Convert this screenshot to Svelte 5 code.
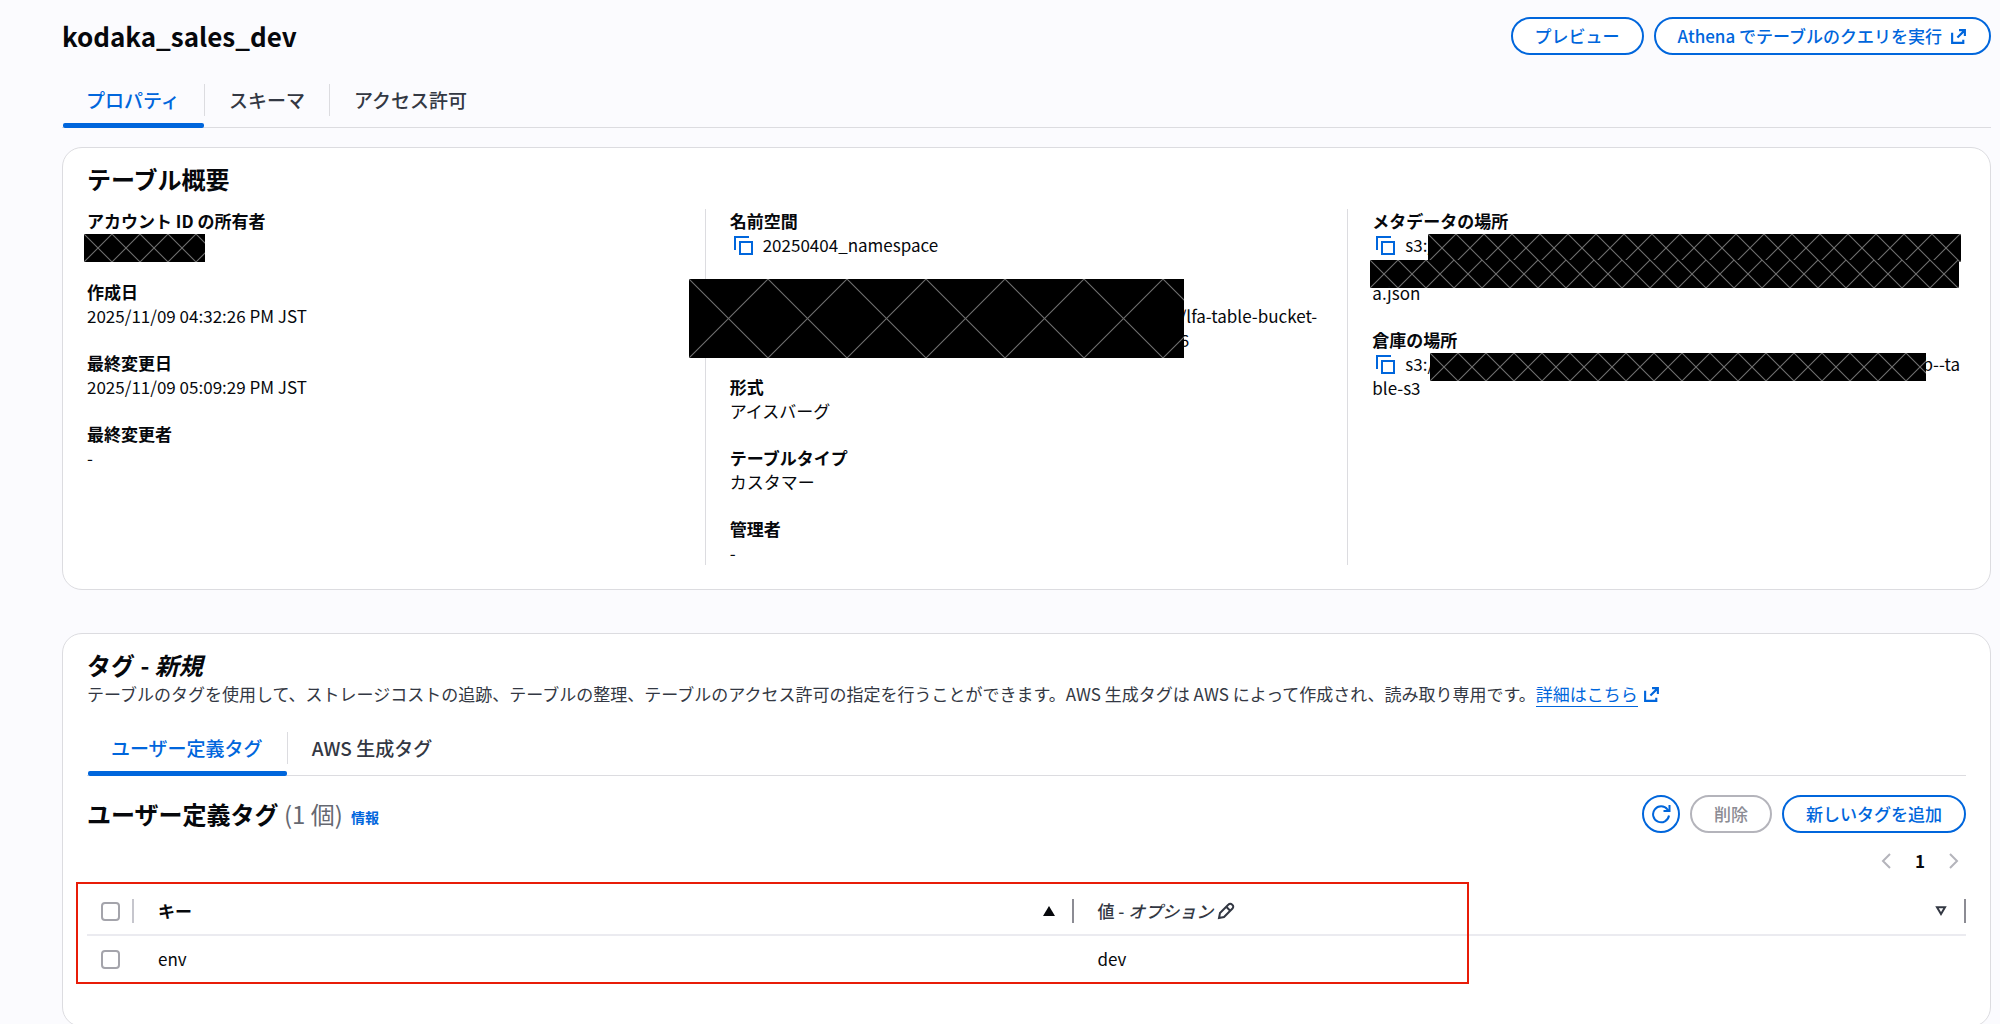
<script lang="ts">
  type Tag = { key: string; value: string };

  const pageTabs = ['プロパティ', 'スキーマ', 'アクセス許可'];
  const tagTabs = ['ユーザー定義タグ', 'AWS 生成タグ'];
  const tags: Tag[] = [{ key: 'env', value: 'dev' }];

  let activePageTab = $state(0);
  let activeTagTab = $state(0);
  let selected: string[] = $state([]);

  const allSelected = $derived(selected.length === tags.length);

  function toggleAll() {
    selected = allSelected ? [] : tags.map((t) => t.key);
  }
</script>

{#snippet externalIcon()}
  <svg class="icon-external" viewBox="0 0 16 16" aria-hidden="true">
    <path d="M8.500 2H14v5.500M14 2 7 9M2 4.500V14h10.500v-3" />
  </svg>
{/snippet}

{#snippet copyButton(label: string)}
  <button class="copy" type="button" aria-label={label}>
    <svg viewBox="0 0 19 19" aria-hidden="true">
      <path d="M1 14V1h14" />
      <path d="M6 6h12v12H6z" />
    </svg>
  </button>
{/snippet}

<main class="page">
  <header class="page-header">
    <h1>kodaka_sales_dev</h1>
    <div class="actions">
      <button class="btn" type="button">プレビュー</button>
      <button class="btn" type="button">Athena でテーブルのクエリを実行 {@render externalIcon()}</button>
    </div>
  </header>

  <div class="tabs" role="tablist">
    {#each pageTabs as tab, i}
      <button
        class="tab"
        class:active={activePageTab === i}
        type="button"
        role="tab"
        aria-selected={activePageTab === i}
        onclick={() => (activePageTab = i)}
      >
        <span>{tab}</span>
      </button>
    {/each}
  </div>

  <section class="card">
    <h2>テーブル概要</h2>
    <div class="columns">
      <dl>
        <div>
          <dt>アカウント ID の所有者</dt>
          <dd><span class="mask mask-account"></span></dd>
        </div>
        <div>
          <dt>作成日</dt>
          <dd>2025/11/09 04:32:26 PM JST</dd>
        </div>
        <div>
          <dt>最終変更日</dt>
          <dd>2025/11/09 05:09:29 PM JST</dd>
        </div>
        <div>
          <dt>最終変更者</dt>
          <dd>-</dd>
        </div>
      </dl>

      <dl>
        <div>
          <dt>名前空間</dt>
          <dd class="line">{@render copyButton('名前空間をコピー')}20250404_namespace</dd>
        </div>
        <div class="arn">
          <dt></dt>
          <dd>/lfa-table-bucket-<br />6</dd>
          <span class="mask mask-arn"></span>
        </div>
        <div>
          <dt>形式</dt>
          <dd>アイスバーグ</dd>
        </div>
        <div>
          <dt>テーブルタイプ</dt>
          <dd>カスタマー</dd>
        </div>
        <div>
          <dt>管理者</dt>
          <dd>-</dd>
        </div>
      </dl>

      <dl>
        <div>
          <dt>メタデータの場所</dt>
          <dd class="line">
            {@render copyButton('メタデータの場所をコピー')}s3:/
            <span class="mask mask-meta"></span>
          </dd>
          <dd><span class="mask mask-meta-rest"></span></dd>
          <dd>a.json</dd>
        </div>
        <div>
          <dt>倉庫の場所</dt>
          <dd class="line">
            {@render copyButton('倉庫の場所をコピー')}s3:/
            <span class="tail">b--ta</span>
            <span class="mask mask-warehouse"></span>
          </dd>
          <dd>ble-s3</dd>
        </div>
      </dl>
    </div>
  </section>

  <section class="card tags">
    <h2>タグ - <em>新規</em></h2>
    <p class="description">
      テーブルのタグを使用して、ストレージコストの追跡、テーブルの整理、テーブルのアクセス許可の指定を行うことができます。AWS 生成タグは AWS によって作成され、読み取り専用です。<a href="#learn-more"><span>詳細はこちら</span>{@render externalIcon()}</a>
    </p>

    <div class="tabs" role="tablist">
      {#each tagTabs as tab, i}
        <button
          class="tab"
          class:active={activeTagTab === i}
          type="button"
          role="tab"
          aria-selected={activeTagTab === i}
          onclick={() => (activeTagTab = i)}
        >
          <span>{tab}</span>
        </button>
      {/each}
    </div>

    <div class="toolbar">
      <h2>ユーザー定義タグ <span class="count">({tags.length} 個)</span></h2>
      <a class="info" href="#info">情報</a>
      <div class="actions">
        <button class="btn round" type="button" aria-label="更新">
          <svg viewBox="0 0 20 20" aria-hidden="true">
            <path d="M18 11.5A8 8 0 1 1 16.5 5.500L18 7" />
            <path d="M18.500 1v6h-6" />
          </svg>
        </button>
        <button class="btn" type="button" disabled={selected.length === 0}>削除</button>
        <button class="btn" type="button">新しいタグを追加</button>
      </div>
    </div>

    <nav class="pagination" aria-label="ページ">
      <button type="button" disabled aria-label="前へ">
        <svg viewBox="0 0 10 16" aria-hidden="true"><path d="M9 1 2 8l7 7" /></svg>
      </button>
      <button class="current" type="button">1</button>
      <button type="button" disabled aria-label="次へ">
        <svg viewBox="0 0 10 16" aria-hidden="true"><path d="m1 1 7 7-7 7" /></svg>
      </button>
    </nav>

    <div class="table-wrap">
      <table>
        <thead>
          <tr>
            <th class="check">
              <div class="cell">
                <input type="checkbox" aria-label="すべて選択" checked={allSelected} onchange={toggleAll} />
              </div>
            </th>
            <th class="key">
              <div class="cell">
                キー
                <svg class="sort" viewBox="0 0 12 10" aria-hidden="true"><path d="M6 0l6 10H0z" /></svg>
              </div>
            </th>
            <th class="value">
              <div class="cell">
                <span>値 - <em>オプション</em></span>
                <svg class="pencil" viewBox="0 0 18 18" aria-hidden="true">
                  <path d="M2 16l1-5 8.500-8.500a2.400 2.400 0 0 1 3.500 0l.5.5a2.400 2.400 0 0 1 0 3.500L7 15z" />
                  <path d="M9.500 5l3.700 3.700" />
                </svg>
                <svg class="sort outline" viewBox="0 0 12 10" aria-hidden="true"><path d="M2 1.200h8L6 8z" /></svg>
              </div>
            </th>
          </tr>
        </thead>
        <tbody>
          {#each tags as tag}
            <tr>
              <td class="check">
                <input type="checkbox" aria-label={tag.key} value={tag.key} bind:group={selected} />
              </td>
              <td>{tag.key}</td>
              <td>{tag.value}</td>
            </tr>
          {/each}
        </tbody>
      </table>
      <div class="highlight"></div>
    </div>
  </section>
</main>

<style>
  :global(body) {
    background: #fbfbfe;
    overflow: hidden;
  }

  .page {
    --blue: #0066dc;
    --border: #dcdce0;
    padding: 17px 9px 0 62px;
    color: #06080c;
    font: 17px/24px 'Noto Sans CJK JP', sans-serif;
  }

  .page :global(*) {
    box-sizing: border-box;
  }

  h1,
  h2,
  p,
  dl,
  dd {
    margin: 0;
  }

  h1 {
    font-size: 26px;
    line-height: 38px;
  }

  h2 {
    font-size: 24px;
    line-height: 30px;
  }

  button {
    padding: 0;
    border: 0;
    background: none;
    color: inherit;
    font: inherit;
    cursor: pointer;
  }

  svg {
    flex: none;
    fill: none;
    stroke: currentColor;
    stroke-width: 2;
  }

  .page-header {
    display: flex;
    justify-content: space-between;
  }

  .actions {
    display: flex;
    gap: 10px;
  }

  .btn {
    display: flex;
    align-items: center;
    gap: 8px;
    height: 38px;
    padding: 0 22px;
    border: 2px solid var(--blue);
    border-radius: 19px;
    background: #fff;
    color: var(--blue);
    font-weight: 500;
  }

  .btn:disabled {
    border-color: #b4b4bb;
    color: #8c8c94;
  }

  .round {
    justify-content: center;
    width: 38px;
    padding: 0;
  }

  .round svg {
    width: 20px;
    height: 20px;
  }

  .icon-external {
    width: 17px;
    height: 17px;
  }

  /* tabs */
  .tabs {
    display: flex;
    margin-top: 29px;
    border-bottom: 1px solid var(--border);
  }

  .tab {
    position: relative;
    padding-bottom: 11px;
    color: #333843;
    font-size: 19px;
    font-weight: 500;
    line-height: 32px;
  }

  .tab span {
    display: block;
    padding: 0 24px;
  }

  .tab + .tab span {
    border-left: 1px solid var(--border);
  }

  .tab.active {
    color: var(--blue);
  }

  .tab.active::after {
    content: '';
    position: absolute;
    right: 0;
    bottom: -1px;
    left: 1px;
    height: 5px;
    border-radius: 2px;
    background: var(--blue);
  }

  .card {
    margin-top: 19px;
    padding: 16px 24px 24px;
    border: 1px solid var(--border);
    border-radius: 20px;
    background: #fff;
  }

  .columns {
    display: grid;
    grid-template-columns: repeat(3, 1fr);
    gap: 49px;
    margin-top: 15px;
  }

  dl {
    display: flex;
    flex-direction: column;
    gap: 23px;
  }

  dl + dl {
    margin-left: -25px;
    padding-left: 24px;
    border-left: 1px solid var(--border);
  }

  dt {
    min-height: 24px;
    font-weight: 700;
  }

  dd {
    position: relative;
    min-height: 24px;
  }

  .line {
    display: flex;
    align-items: center;
  }

  .copy {
    display: flex;
    padding: 0 10px 0 4px;
    color: var(--blue);
  }

  .copy svg {
    width: 19px;
    height: 19px;
  }

  .tail {
    margin-left: auto;
    padding-right: 6px;
  }

  .arn {
    position: relative;
  }

  .arn dd {
    padding-left: 450px;
  }

  /* blacked-out values, crossed with one X per square */
  .mask {
    --size: 28px;
    position: absolute;
    top: 1px;
    height: var(--size);
    background:
      linear-gradient(to top right, transparent calc(50% - 1px), #6a6a6a 50%, transparent calc(50% + 1px)) 0 0 / var(--size) var(--size),
      linear-gradient(to bottom right, transparent calc(50% - 1px), #6a6a6a 50%, transparent calc(50% + 1px)) 0 0 / var(--size) var(--size),
      #000;
  }

  .mask-account {
    left: -3px;
    width: 121px;
  }

  .mask-arn {
    --size: 79px;
    top: -1px;
    left: -41px;
    width: 495px;
  }

  .mask-meta {
    right: 5px;
    left: 56px;
  }

  .mask-meta-rest {
    top: 3px;
    right: 7px;
    left: -2px;
  }

  .mask-warehouse {
    right: 40px;
    left: 58px;
  }

  .tags {
    margin-top: 43px;
    padding-bottom: 44px;
  }

  .description {
    margin-top: 2px;
    color: #333843;
  }

  a {
    color: var(--blue);
    text-decoration: none;
  }

  .description a span {
    margin-right: 5px;
    border-bottom: 1px solid var(--blue);
  }

  .description :global(svg) {
    vertical-align: -2px;
  }

  .tags .tabs {
    margin-top: 26px;
  }

  .toolbar {
    display: flex;
    align-items: center;
    gap: 8px;
    margin-top: 19px;
  }

  .toolbar .actions {
    margin-left: auto;
  }

  .count {
    color: #656871;
    font-weight: 400;
  }

  .info {
    padding-top: 6px;
    font-size: 14px;
    font-weight: 700;
  }

  .pagination {
    display: flex;
    justify-content: flex-end;
    gap: 24px;
    margin-top: 16px;
    padding-right: 7px;
  }

  .pagination button {
    display: flex;
    align-items: center;
    color: #b4b4bb;
  }

  .pagination svg {
    width: 10px;
    height: 16px;
  }

  .pagination .current {
    color: inherit;
    font-weight: 700;
  }

  .table-wrap {
    position: relative;
    margin-top: 14px;
  }

  table {
    width: 100%;
    table-layout: fixed;
    border-collapse: collapse;
  }

  th,
  td {
    padding: 11px 0 11px 24px;
    text-align: left;
  }

  th {
    padding-top: 12px;
    border-bottom: 2px solid #ebebf0;
  }

  .cell {
    display: flex;
    align-items: center;
    gap: 4px;
    height: 24px;
    border-right: 2px solid #8c8c94;
  }

  .check {
    width: 47px;
    padding-left: 14px;
  }

  .check .cell {
    border-color: #c6c6cd;
  }

  .key {
    width: 50%;
  }

  .value {
    color: #333843;
    font-weight: 500;
  }

  .sort {
    width: 12px;
    height: 10px;
    margin: 0 17px 0 auto;
    fill: currentColor;
    stroke: none;
  }

  .outline {
    fill: none;
    stroke: currentColor;
  }

  .pencil {
    width: 18px;
    height: 18px;
  }

  input {
    display: block;
    width: 19px;
    height: 19px;
    margin: 0;
    border: 2px solid #a4a4ab;
    border-radius: 4px;
    background: #fff;
    appearance: none;
  }

  input:checked {
    border-color: var(--blue);
    background: var(--blue);
  }

  .highlight {
    position: absolute;
    top: -5px;
    left: -11px;
    width: calc(74% + 3px);
    height: 102px;
    border: 2px solid #e81c08;
    pointer-events: none;
  }
</style>
